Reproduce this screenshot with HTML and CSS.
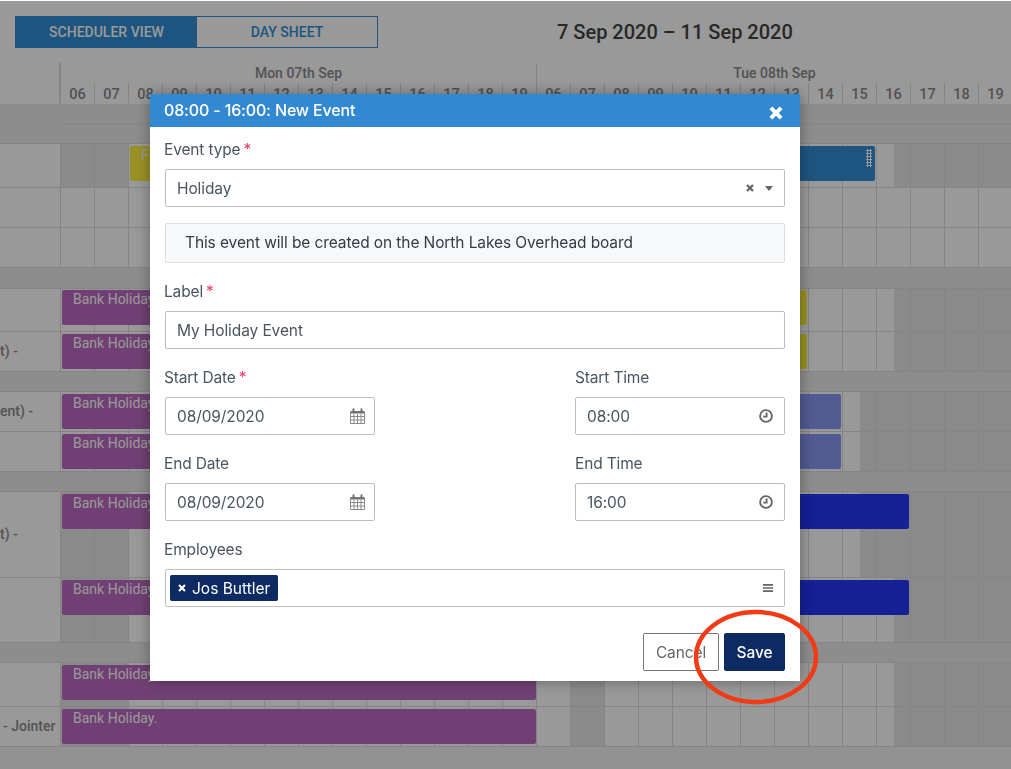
FILE: index.html
```html
<!DOCTYPE html>
<html lang="en">
<head>
<meta charset="utf-8">
<title>Scheduler</title>
<link rel="stylesheet" href="styles.css">
</head>
<body>
<main class="page">
  <header class="toolbar">
    <div class="views">
      <button class="view view-on">SCHEDULER VIEW</button>
      <button class="view">DAY SHEET</button>
    </div>
    <h1 class="range">7 Sep 2020 – 11 Sep 2020</h1>
  </header>
  <div class="timeline-head">
    <div class="corner"></div>
    <div class="day"><div class="day-name">Mon 07th Sep</div><div class="hours"><span>06</span><span>07</span><span>08</span><span>09</span><span>10</span><span>11</span><span>12</span><span>13</span><span>14</span><span>15</span><span>16</span><span>17</span><span>18</span><span>19</span></div></div>
    <div class="day"><div class="day-name">Tue 08th Sep</div><div class="hours"><span>06</span><span>07</span><span>08</span><span>09</span><span>10</span><span>11</span><span>12</span><span>13</span><span>14</span><span>15</span><span>16</span><span>17</span><span>18</span><span>19</span></div></div>
  </div>
  <section class="rows">
    <div class="group group-tall"></div>
    <div class="row h44"><div class="who"></div><div class="track shade-lr">
      <div class="bar yellow" style="left:70px;width:300px">F</div>
      <div class="bar blue" style="left:480px;width:335px"><i class="grip"></i></div>
    </div></div>
    <div class="row h40"><div class="who"></div><div class="track"></div></div>
    <div class="row h40"><div class="who"></div><div class="track"></div></div>
    <div class="group h21"></div>
    <div class="row h43"><div class="who"></div><div class="track shade-r">
      <div class="bar purple top1" style="left:2px;width:474px">Bank Holiday.</div>
      <div class="bar yellow top1" style="left:480px;width:267px"></div>
    </div></div>
    <div class="row h40"><div class="who">t) -</div><div class="track shade-r">
      <div class="bar purple" style="left:2px;width:474px">Bank Holiday.</div>
      <div class="bar yellow" style="left:480px;width:267px"></div>
    </div></div>
    <div class="group h20"></div>
    <div class="row h40"><div class="who">ent) -</div><div class="track shade-r2">
      <div class="bar purple" style="left:2px;width:474px">Bank Holiday.</div>
      <div class="bar periwinkle" style="left:480px;width:301px"></div>
    </div></div>
    <div class="row h40"><div class="who"></div><div class="track shade-r2">
      <div class="bar purple" style="left:2px;width:474px">Bank Holiday.</div>
      <div class="bar periwinkle" style="left:480px;width:301px"></div>
    </div></div>
    <div class="group h20"></div>
    <div class="row h86"><div class="who">t) -</div><div class="track shade-lr2">
      <div class="bar purple" style="left:2px;width:474px">Bank Holiday.</div>
      <div class="bar navy" style="left:480px;width:369px"></div>
    </div></div>
    <div class="row h65"><div class="who"></div><div class="track shade-lr">
      <div class="bar purple" style="left:2px;width:474px">Bank Holiday.</div>
      <div class="bar navy" style="left:480px;width:369px"></div>
    </div></div>
    <div class="group h20"></div>
    <div class="row h44"><div class="who"></div><div class="track shade-full">
      <div class="bar purple" style="left:2px;width:474px">Bank Holiday.</div>
    </div></div>
    <div class="row h40"><div class="who who-job">- Jointer</div><div class="track shade-full">
      <div class="bar purple" style="left:2px;width:474px">Bank Holiday.</div>
    </div></div>
  </section>
</main>

<div class="backdrop"></div>

<section class="modal">
  <header class="modal-head">
    <h2 class="modal-title">08:00 - 16:00: New Event</h2>
    <svg class="modal-close" viewBox="0 0 14 14"><path d="M2.5 2.5l9 9M11.5 2.5l-9 9"/></svg>
  </header>
  <form class="modal-body">
    <div class="field field-first">
      <label class="label">Event type<b class="req">*</b></label>
      <div class="control">
        <span class="value">Holiday</span>
        <svg class="clear" viewBox="0 0 8 8"><path d="M1 1l6 6M7 1L1 7"/></svg>
        <svg class="caret" viewBox="0 0 8 5"><path d="M0 0h8L4 5z"/></svg>
      </div>
    </div>
    <div class="notice">This event will be created on the North Lakes Overhead board</div>
    <div class="field">
      <label class="label">Label<b class="req">*</b></label>
      <div class="control"><span class="value">My Holiday Event</span></div>
    </div>
    <div class="pair">
      <div class="field">
        <label class="label">Start Date<b class="req">*</b></label>
        <div class="control"><span class="value">08/09/2020</span>
          <svg class="cal" viewBox="0 0 15 16"><path class="cal-grid" d="M.5 3.5h14v12H.5zM.5 8.5h14M.5 12h14M4 6v9.5M7.5 6v9.5M11 6v9.5"/><path class="cal-band" d="M1 4.5h13M3.5 .5v3M11.5 .5v3"/></svg>
        </div>
      </div>
      <div class="field">
        <label class="label">Start Time</label>
        <div class="control"><span class="value">08:00</span>
          <svg class="clock" viewBox="0 0 14 14"><circle cx="7" cy="7" r="5.9"/><path d="M7.6 3.4v4.2H4.2"/></svg>
        </div>
      </div>
      <div class="field">
        <label class="label">End Date</label>
        <div class="control"><span class="value">08/09/2020</span>
          <svg class="cal" viewBox="0 0 15 16"><path class="cal-grid" d="M.5 3.5h14v12H.5zM.5 8.5h14M.5 12h14M4 6v9.5M7.5 6v9.5M11 6v9.5"/><path class="cal-band" d="M1 4.5h13M3.5 .5v3M11.5 .5v3"/></svg>
        </div>
      </div>
      <div class="field">
        <label class="label">End Time</label>
        <div class="control"><span class="value">16:00</span>
          <svg class="clock" viewBox="0 0 14 14"><circle cx="7" cy="7" r="5.9"/><path d="M7.6 3.4v4.2H4.2"/></svg>
        </div>
      </div>
    </div>
    <div class="field field-last">
      <label class="label">Employees</label>
      <div class="control control-tags">
        <span class="chip"><svg class="chip-x" viewBox="0 0 8 8"><path d="M1 1l6 6M7 1L1 7"/></svg>Jos Buttler</span>
        <svg class="menu" viewBox="0 0 10 8"><path d="M0 .85h10M0 4h10M0 7.15h10"/></svg>
      </div>
    </div>
    <footer class="actions">
      <button type="button" class="btn btn-cancel">Cancel</button>
      <button type="button" class="btn btn-save">Save</button>
    </footer>
  </form>
</section>

<svg class="annotation" viewBox="0 0 130 100"><ellipse cx="65" cy="50" rx="60" ry="45"/></svg>
</body>
</html>
```

FILE: styles.css
```css
* { box-sizing: border-box; }
html, body { margin: 0; height: 100%; overflow: hidden; background: #f4f4f4; }
body { font-family: Roboto, "Liberation Sans", sans-serif; color: #333; }

.page { width: 1011px; height: 769px; overflow: hidden; }

.toolbar { display: flex; align-items: center; height: 63px; padding: 0 0 15px 15px; background: #fff; }
.views { display: flex; width: 363px; height: 32px; margin-top: 16px; border: 1px solid #328ed5; }
.view { flex: 1; border: 0; background: #fff; color: #328ed5; font: 500 14px Roboto, sans-serif; padding: 0; }
.view-on { flex: 0 0 181px; background: #328ed5; color: #fff; }
.range { margin: 16px 0 0 179px; font-size: 20px; font-weight: 500; line-height: 32px; color: #444; white-space: nowrap; }

.timeline-head { display: flex; height: 41px; background: #fff; }
.corner { width: 60px; flex: none; border-right: 1px solid #dedede; margin-bottom: 1px; }
.day { width: 476px; flex: none; border-left: 1px solid #dedede; }
.day-name { height: 20px; font-size: 14px; font-weight: 500; line-height: 20px; text-align: center; color: #8a8a8a; }
.hours { display: flex; height: 20px; margin-left: -1px; }
.hours span { width: 34px; flex: none; padding-top: 1px; font-size: 14.5px; font-weight: 500; line-height: 21px; text-align: center; color: #8a8a8a; border-left: 1px solid #dedede; }
.hours span:first-child { border-left-color: transparent; }

.rows { display: flex; flex-direction: column; width: 1011px; background: #f4f4f4; }
.group { flex: none; background: #e9ebe9; border-bottom: 1px solid #dedede; }
.group-tall { height: 40px; background: linear-gradient(#dedede, #dedede) 60px 19px / 100% 1px no-repeat #e9ebe9; }
.row { display: flex; flex: none; border-bottom: 1px solid #dedede; background: #fff; }
.h20 { height: 20px; } .h21 { height: 21px; } .h40 { height: 40px; } .h43 { height: 43px; }
.h44 { height: 44px; } .h65 { height: 65px; } .h86 { height: 86px; }

.who { display: flex; align-items: center; width: 60px; flex: none; padding-bottom: 1px; font-size: 14px; font-weight: 500; color: #8a8a8a; white-space: nowrap; overflow: hidden; }
.who-job { padding-left: 3px; }

.track {
  position: relative; flex: 1; overflow: hidden;
  --lines: repeating-linear-gradient(90deg, #dedede 0 1px, transparent 1px 34px);
  background: var(--lines);
}
.shade-r { background: var(--lines), linear-gradient(90deg, transparent 834px, #e6e6e6 834px); }
.shade-r2 { background: var(--lines), linear-gradient(90deg, transparent 800px, #e6e6e6 800px); }
.shade-lr { background: var(--lines), linear-gradient(90deg, #e6e6e6 68px, transparent 68px 834px, #e6e6e6 834px); }
.shade-lr2 { background: var(--lines), linear-gradient(90deg, #e6e6e6 68px, transparent 68px 800px, #e6e6e6 800px); }
.shade-full { background: var(--lines), linear-gradient(90deg, #e6e6e6 68px, transparent 68px 510px, #e6e6e6 510px 544px, transparent 544px 834px, #e6e6e6 834px); }

.bar { position: absolute; top: 2px; height: 35px; padding: 1px 11px; border-radius: 2px; font-size: 14px; font-weight: 400; line-height: 16px; color: #fff; white-space: nowrap; }
.top1 { top: 1px; }
.purple { background: #bb6bc1; }
.yellow { background: #fff03f; }
.blue { background: #328ed5; }
.periwinkle { background: #8a98f5; }
.navy { background: #2337f7; }
.grip { position: absolute; right: 3px; top: 3px; width: 6px; height: 18px; background: radial-gradient(circle, #fff 1.1px, transparent 1.3px) 0 0 / 3px 3px; }

.backdrop { position: fixed; inset: 1px 0 0; background: rgba(0, 0, 0, .4); }

.modal { position: fixed; left: 150px; top: 94px; width: 650px; background: #fff; box-shadow: 0 0 14px rgba(0, 0, 0, .35); font-family: Inter, "Noto Sans", sans-serif; color: #4a5560; }
.modal-head { display: flex; align-items: center; justify-content: space-between; height: 33px; padding: 0 16px 2px 14px; background: #3388d2; }
.modal-title { margin: 0; font-size: 16px; font-weight: 500; color: #fff; letter-spacing: -.15px; }
.modal-close { width: 16px; height: 16px; margin-top: 6px; fill: none; stroke: #fff; stroke-width: 3.4; }

.modal-body { padding: 12px 15px 10px; }
.field { margin-bottom: 18px; }
.field-first { margin-bottom: 16px; }
.field-last { margin-bottom: 26px; }
.label { display: block; height: 20px; margin: 0 0 10px -1px; padding-top: 1px; font-size: 15.5px; line-height: 20px; letter-spacing: -.15px; }
.pair .field:nth-child(even) .label { margin-left: 0; }
.req { margin-left: 3px; font-weight: 400; color: #ee3a62; }

.control { display: flex; align-items: center; height: 38px; padding: 0 12px 0 11px; background: #fff; border: 1px solid #bdbdbd; border-radius: 2px; font-size: 15.5px; color: #4a5560; letter-spacing: -.1px; }
.value { flex: 1; }

.clear { width: 8px; height: 8px; margin-right: 11px; fill: none; stroke: #666; stroke-width: 2.4; }
.caret { width: 8px; height: 5px; margin-right: -1px; fill: #666; }
.cal { width: 15px; height: 16px; margin-right: -3px; fill: none; }
.cal-grid { stroke: #8a8a8a; stroke-width: 1; }
.cal-band { stroke: #6e6e6e; stroke-width: 2; }
.clock { width: 14px; height: 14px; margin: 0 -1px 1px 0; fill: none; stroke: #666; stroke-width: 1.9; }

.notice { height: 40px; margin-bottom: 18px; padding-left: 19px; background: #f7f8fa; border: 1px solid #dedede; border-radius: 2px; font-size: 15.5px; line-height: 38px; color: #333b44; letter-spacing: -.1px; }

.pair { display: grid; grid-template-columns: 210px 210px; justify-content: space-between; }

.control-tags { padding: 0 12px 0 4px; justify-content: space-between; }
.chip { display: inline-flex; align-items: center; height: 26px; padding: 0 8px; background: #0d2a63; border-radius: 2px; color: #fff; font-size: 15.5px; letter-spacing: 0; }
.chip-x { width: 8px; height: 8px; margin-right: 6px; fill: none; stroke: #fff; stroke-width: 2.2; }
.menu { width: 10px; height: 8px; margin-right: -1px; fill: none; stroke: #666; stroke-width: 1.7; }

.actions { display: flex; justify-content: flex-end; gap: 5px; }
.btn { height: 38px; padding: 0; border-radius: 2px; font: 400 15.5px Inter, "Noto Sans", sans-serif; letter-spacing: -.1px; }
.btn-cancel { width: 76px; background: #fff; border: 1px solid #777; color: #666; }
.btn-save { width: 61px; background: #0d2a63; border: 1px solid #0d2a63; color: #fff; font-weight: 500; }

.annotation { position: fixed; left: 691px; top: 607px; width: 130px; height: 100px; fill: none; stroke: #f23a17; stroke-width: 4.5; pointer-events: none; }
```
